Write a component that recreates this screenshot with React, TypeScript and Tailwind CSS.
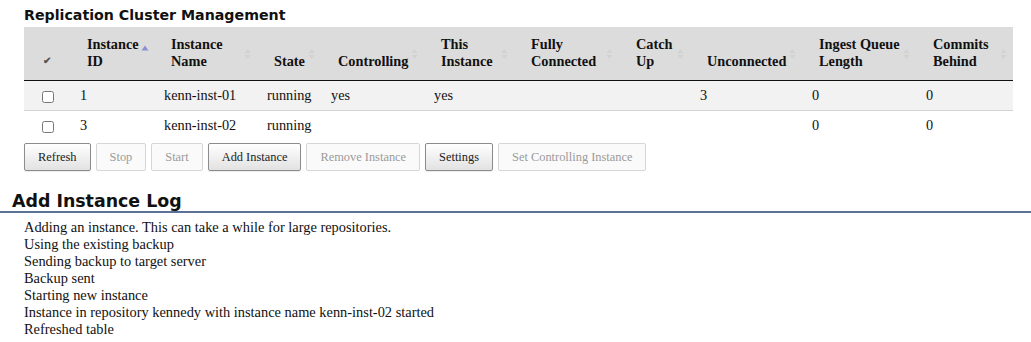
import React from 'react';

type Col = { label: string[]; width: string; sorted?: boolean };

const columns: Col[] = [
  { label: ['Instance', 'ID'], width: 'w-[84px]', sorted: true },
  { label: ['Instance', 'Name'], width: 'w-[103px]' },
  { label: ['State'], width: 'w-[64px]' },
  { label: ['Controlling'], width: 'w-[103px]' },
  { label: ['This', 'Instance'], width: 'w-[90px]' },
  { label: ['Fully', 'Connected'], width: 'w-[105px]' },
  { label: ['Catch', 'Up'], width: 'w-[71px]' },
  { label: ['Unconnected'], width: 'w-[112px]' },
  { label: ['Ingest Queue', 'Length'], width: 'w-[114px]' },
  { label: ['Commits', 'Behind'], width: 'w-[97px]' },
];

const rows = [
  ['1', 'kenn-inst-01', 'running', 'yes', 'yes', '', '', '3', '0', '0'],
  ['3', 'kenn-inst-02', 'running', '', '', '', '', '', '0', '0'],
];

const buttons = [
  { label: 'Refresh', enabled: true },
  { label: 'Stop', enabled: false },
  { label: 'Start', enabled: false },
  { label: 'Add Instance', enabled: true },
  { label: 'Remove Instance', enabled: false },
  { label: 'Settings', enabled: true },
  { label: 'Set Controlling Instance', enabled: false },
];

const logLines = [
  'Adding an instance. This can take a while for large repositories.',
  'Using the existing backup',
  'Sending backup to target server',
  'Backup sent',
  'Starting new instance',
  'Instance in repository kennedy with instance name kenn-inst-02 started',
  'Refreshed table',
];

const SortBoth = () => (
  <svg width="7" height="12" viewBox="0 0 7 12" className="absolute right-[6px] top-1/2 -translate-y-1/2">
    <path d="M3.5 1 L6.5 5 L0.5 5 Z" fill="#d2d2d2" />
    <path d="M3.5 11 L6.5 7 L0.5 7 Z" fill="#d2d2d2" />
  </svg>
);

const SortAsc = () => (
  <svg width="8" height="6" viewBox="0 0 8 6" className="absolute right-[5px] top-[18px]">
    <path d="M4 0.5 L7.5 5.5 L0.5 5.5 Z" fill="#8d8fd4" />
  </svg>
);

const App: React.FC = () => {
  return (
    <div className="w-[1031px] h-[342px] bg-white overflow-hidden text-[#111]">
      <div className="px-6 pt-[5px]">
        <h2 className="font-['DejaVu_Sans',sans-serif] font-bold text-[14.2px] leading-[20px]">
          Replication Cluster Management
        </h2>

        <table className="table-fixed w-[989px] border-collapse mt-[2px] font-['Liberation_Serif',serif] text-[14.3px]">
          <colgroup>
            <col className="w-[46px]" />
            {columns.map((c, i) => (
              <col key={i} className={c.width} />
            ))}
          </colgroup>
          <thead>
            <tr className="bg-[#dcdcdc] border-b border-[#111]">
              <th className="align-bottom pb-[10px] text-center">
                <span className="text-[10px] text-[#555] leading-none">✔</span>
              </th>
              {columns.map((c, i) => (
                <th
                  key={i}
                  className="relative align-bottom text-left font-bold leading-[17px] pl-[17px] pr-[14px] pt-[9px] pb-[10px]"
                >
                  {c.label.map((l, j) => (
                    <div key={j} className="whitespace-nowrap">{l}</div>
                  ))}
                  {c.sorted ? <SortAsc /> : <SortBoth />}
                </th>
              ))}
            </tr>
          </thead>
          <tbody>
            {rows.map((r, i) => (
              <tr key={i} className={i === 0 ? 'bg-[#f2f2f2] border-b border-[#d4d4d4]' : 'bg-white'}>
                <td className="text-center py-[6px] leading-[17px]">
                  <input type="checkbox" className="m-0 ml-[2px] align-middle w-[12px] h-[12px]" />
                </td>
                {r.map((v, j) => (
                  <td key={j} className="pl-[10px] py-[6px] leading-[17px] whitespace-nowrap">
                    {v}
                  </td>
                ))}
              </tr>
            ))}
          </tbody>
        </table>

        <div className="flex gap-[5px] mt-[3px] font-['Liberation_Serif',serif] text-[12.4px]">
          {buttons.map((b) => (
            <button
              key={b.label}
              className={
                b.enabled
                  ? 'h-[28px] px-[13px] rounded-[2px] border border-[#8c8c8c] bg-linear-to-b from-white to-[#e2e2e2] text-[#222] shadow-[0_1px_1px_rgba(0,0,0,0.08)]'
                  : 'h-[28px] px-[13px] rounded-[2px] border border-[#d6d6d6] bg-[#fafafa] text-[#9a9a9a]'
              }
            >
              {b.label}
            </button>
          ))}
        </div>
      </div>

      <div className="mt-[20px] border-b-2 border-[#5b7195] pl-3">
        <h2 className="font-['DejaVu_Sans',sans-serif] font-bold text-[17.4px] leading-[20px]">
          Add Instance Log
        </h2>
      </div>

      <div className="px-6 pt-[6px] font-['Liberation_Serif',serif] text-[14.4px] leading-[17px]">
        {logLines.map((l, i) => (
          <div key={i}>{l}</div>
        ))}
      </div>
    </div>
  );
};

export default App;
